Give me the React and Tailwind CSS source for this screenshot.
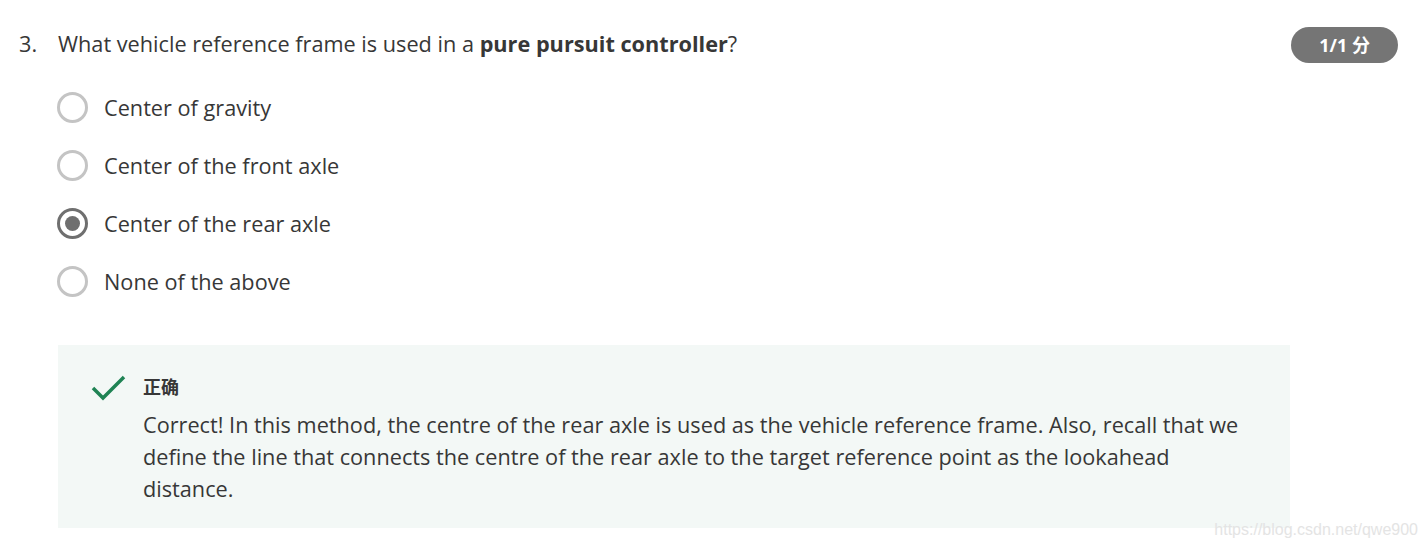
import React from 'react';

const options = [
  { label: 'Center of gravity', checked: false },
  { label: 'Center of the front axle', checked: false },
  { label: 'Center of the rear axle', checked: true },
  { label: 'None of the above', checked: false },
];

const Radio = ({ checked }) =>
  checked ? (
    <span className="w-[31px] h-[31px] rounded-full border-[3px] border-[#6f6f6f] flex items-center justify-center shrink-0">
      <span className="w-[15px] h-[15px] rounded-full bg-[#6f6f6f]" />
    </span>
  ) : (
    <span className="w-[31px] h-[31px] rounded-full border-[3px] border-[#c4c4c4] shrink-0" />
  );

const App = () => {
  return (
    <div
      className="relative w-[1426px] h-[549px] bg-white text-[#373737] overflow-hidden"
      style={{ fontFamily: '"Open Sans", "Noto Sans CJK SC", sans-serif' }}
    >
      <div className="flex pt-[27px] pr-[28px]">
        <div className="w-[58px] pl-[19px] text-[21.7px] leading-[34px]">3.</div>
        <div className="flex-1 text-[21.7px] leading-[34px]">
          What vehicle reference frame is used in a <span className="font-bold">pure pursuit controller</span>?
        </div>
        <div className="h-[36px] px-[28px] rounded-full bg-[#757575] text-white font-bold text-[18px] flex items-center">
          1/1 分
        </div>
      </div>

      <div className="flex flex-col gap-[27px] pl-[57px] mt-[29px]">
        {options.map((o) => (
          <label key={o.label} className="flex items-center gap-[16px] h-[31px]">
            <Radio checked={o.checked} />
            <span className="text-[21.7px] leading-[31px]">{o.label}</span>
          </label>
        ))}
      </div>

      <div className="ml-[58px] mt-[48px] w-[1232px] h-[183px] bg-[#f3f8f6] flex gap-[16px] pl-[33px] pt-[29px]">
        <svg width="36" height="28" viewBox="0 0 36 28" className="mt-[1px] shrink-0">
          <path d="M2 13 L12 23 L33 2" fill="none" stroke="#1f8354" strokeWidth="3.5" />
        </svg>
        <div className="flex flex-col">
          <div className="text-[18px] font-bold leading-[26px]">正确</div>
          <p className="mt-[9px] text-[21.7px] leading-[32px] w-[1100px]">
            Correct! In this method, the centre of the rear axle is used as the vehicle reference frame. Also, recall that we define the line that connects the centre of the rear axle to the target reference point as the lookahead distance.
          </p>
        </div>
      </div>

      <div
        className="absolute right-[8px] bottom-[7px] text-[16px] text-[#e4e4e4]"
        style={{ fontFamily: '"Liberation Sans", Arial, sans-serif' }}
      >
        https://blog.csdn.net/qwe900
      </div>
    </div>
  );
};

export default App;
